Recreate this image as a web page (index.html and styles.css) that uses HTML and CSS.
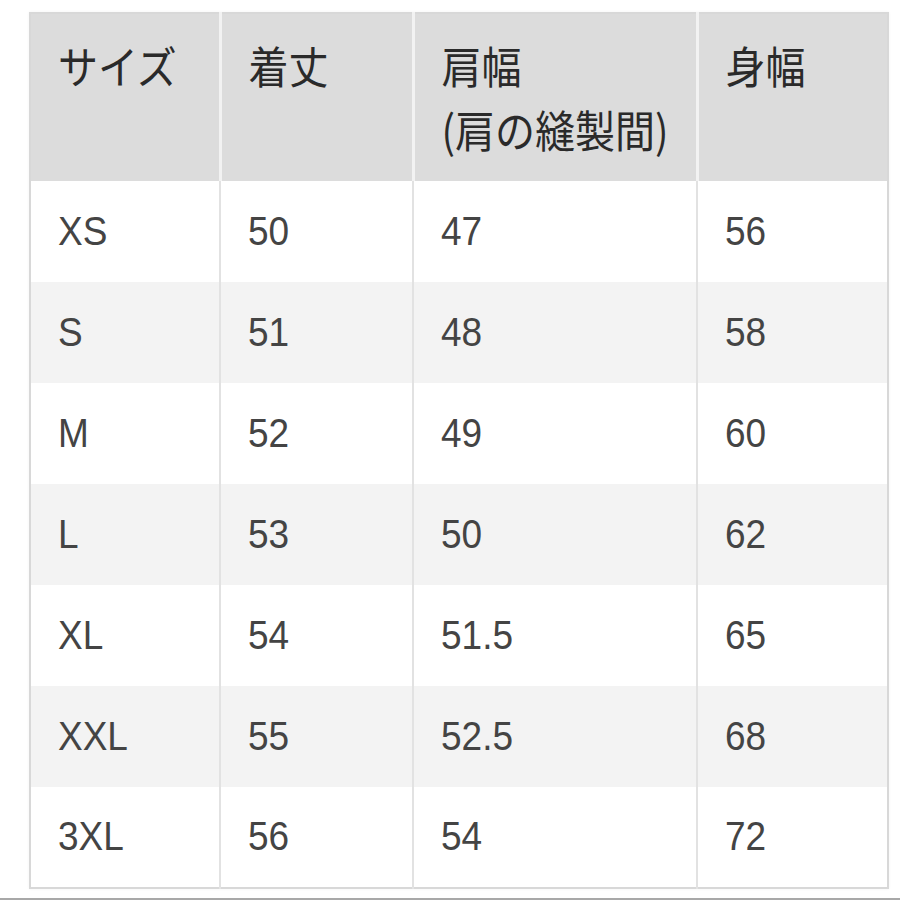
FILE: index.html
```html
<!DOCTYPE html>
<html lang="ja">
<head>
<meta charset="utf-8">
<link rel="stylesheet" href="styles.css">
</head>
<body>
<div class="page">
<table class="size-table">
  <colgroup>
    <col class="c1"><col class="c2"><col class="c3"><col class="c4">
  </colgroup>
  <thead>
    <tr>
      <th><span class="t">サイズ</span></th>
      <th><span class="t">着丈</span></th>
      <th><span class="t">肩幅<br>(肩の縫製間)</span></th>
      <th><span class="t">身幅</span></th>
    </tr>
  </thead>
  <tbody>
    <tr><td><span class="t">XS</span></td><td><span class="t">50</span></td><td><span class="t">47</span></td><td><span class="t">56</span></td></tr>
    <tr><td><span class="t">S</span></td><td><span class="t">51</span></td><td><span class="t">48</span></td><td><span class="t">58</span></td></tr>
    <tr><td><span class="t">M</span></td><td><span class="t">52</span></td><td><span class="t">49</span></td><td><span class="t">60</span></td></tr>
    <tr><td><span class="t">L</span></td><td><span class="t">53</span></td><td><span class="t">50</span></td><td><span class="t">62</span></td></tr>
    <tr><td><span class="t">XL</span></td><td><span class="t">54</span></td><td><span class="t">51.5</span></td><td><span class="t">65</span></td></tr>
    <tr><td><span class="t">XXL</span></td><td><span class="t">55</span></td><td><span class="t">52.5</span></td><td><span class="t">68</span></td></tr>
    <tr><td><span class="t">3XL</span></td><td><span class="t">56</span></td><td><span class="t">54</span></td><td><span class="t">72</span></td></tr>
  </tbody>
</table>
<div class="rule"></div>
</div>
</body>
</html>
```

FILE: styles.css
```css
html, body {
  margin: 0;
  padding: 0;
  background: #ffffff;
}

.page {
  width: 900px;
  height: 900px;
  padding-top: 12px;
  box-sizing: border-box;
  overflow: hidden;
}

.size-table {
  margin-left: 29px;
  width: 860px;
  border-collapse: collapse;
  table-layout: fixed;
  border: 2px solid #d8d8d8;
  font-family: "Liberation Sans", "Noto Sans CJK JP", sans-serif;
  box-shadow: 0 0 3px rgba(0,0,0,0.05);
}

.c1 { width: 190px; }
.c2 { width: 193px; }
.c3 { width: 284px; }
.c4 { width: 191px; }

.size-table th {
  background: #dcdcdc;
  height: 168px;
  padding: 20px 6px 0 27px;
  box-sizing: border-box;
  vertical-align: top;
  text-align: left;
  font-family: "Noto Sans CJK JP", sans-serif;
  font-weight: normal;
  font-size: 40px;
  line-height: 57px;
  color: #2a2a2a;
  border-left: 3px solid #f2f2f2;
}

.size-table th .t {
  transform-origin: top left;
}

.size-table th:first-child {
  border-left: none;
}

.size-table td {
  height: 101px;
  padding: 0 10px 0 27px;
  box-sizing: border-box;
  vertical-align: middle;
  text-align: left;
  font-size: 37px;
  color: #444444;
  border-left: 2px solid #e2e2e2;
}

.size-table td:first-child {
  border-left: none;
}

.size-table tbody tr:nth-child(odd) td {
  background: #ffffff;
}

.size-table tbody tr:nth-child(even) td {
  background: #f3f3f3;
}

.t {
  display: inline-block;
  transform: scaleY(1.12);
  transform-origin: center;
}

.rule {
  margin-top: 9px;
  height: 2px;
  background: #a8a8a8;
}
```
